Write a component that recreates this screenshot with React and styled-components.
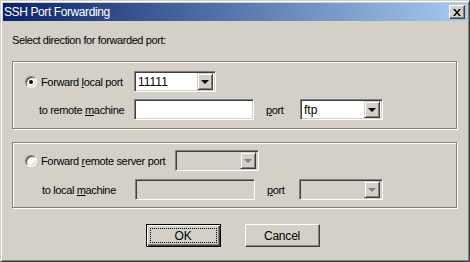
import React from "react";
import styled, { createGlobalStyle } from "styled-components";

const GlobalStyle = createGlobalStyle`
  html, body {
    margin: 0;
    padding: 0;
    background: #d4d0c8;
  }
  body {
    font-family: "Liberation Sans", Arial, sans-serif;
    font-size: 11px;
    letter-spacing: -0.35px;
    color: #000;
  }
`;

const Window = styled.div`
  width: 470px;
  height: 262px;
  box-sizing: border-box;
  background: #d4d0c8;
  border: 1px solid;
  border-color: #d4d0c8 #404040 #404040 #d4d0c8;
  box-shadow: inset 1px 1px #fff, inset -1px -1px #808080;
  padding: 2px;
  display: flex;
  flex-direction: column;
`;

const TitleBar = styled.div`
  height: 18px;
  flex: none;
  display: flex;
  align-items: center;
  justify-content: space-between;
  padding: 0 2px 0 1px;
  background: linear-gradient(to right, #0a246a, #a6caf0);
  color: #fff;
  font-size: 12px;
  letter-spacing: -0.4px;
`;

const CloseButton = styled.div`
  width: 16px;
  height: 14px;
  box-sizing: border-box;
  background: #d4d0c8;
  border: 1px solid;
  border-color: #fff #404040 #404040 #fff;
  box-shadow: inset -1px -1px #808080;
  display: flex;
  align-items: center;
  justify-content: center;
`;

const Body = styled.div`
  flex: 1;
  display: flex;
  flex-direction: column;
  padding: 12px 10px 0 9px;
`;

const Prompt = styled.div`
  height: 14px;
  line-height: 14px;
  margin-bottom: 14px;
  letter-spacing: -0.4px;
`;

const Group = styled.div`
  height: ${(p) => p.$h}px;
  box-sizing: border-box;
  border: 1px solid #808080;
  box-shadow: inset 1px 1px #fff, 1px 1px #fff;
  margin-bottom: ${(p) => p.$mb || 0}px;
  padding: ${(p) => p.$pt}px 0 0 12px;
  display: flex;
  flex-direction: column;
  gap: ${(p) => p.$gap}px;
`;

const Row = styled.div`
  display: flex;
  align-items: center;
  height: 21px;
`;

const RadioLabel = styled.label`
  width: ${(p) => p.$w}px;
  display: flex;
  align-items: center;
  gap: 4px;
  flex: none;
`;

const Radio = styled.span`
  width: 12px;
  height: 12px;
  box-sizing: border-box;
  border-radius: 50%;
  background: #fff;
  border: 1px solid;
  border-color: #808080 #fff #fff #808080;
  box-shadow: inset 1px 1px #404040, inset -1px -1px #d4d0c8;
  display: flex;
  align-items: center;
  justify-content: center;
  &::after {
    content: "";
    width: 4px;
    height: 4px;
    border-radius: 50%;
    background: ${(p) => (p.$checked ? "#000" : "transparent")};
  }
`;

const FieldLabel = styled.span`
  width: ${(p) => p.$w}px;
  padding-left: ${(p) => p.$pl}px;
  box-sizing: border-box;
  flex: none;
`;

const PortLabel = styled.span`
  width: ${(p) => p.$w}px;
  padding-left: 12px;
  flex: none;
`;

const Sunken = styled.div`
  width: ${(p) => p.$w}px;
  height: ${(p) => p.$h || 21}px;
  box-sizing: border-box;
  flex: none;
  background: ${(p) => (p.$disabled ? "#d4d0c8" : "#fff")};
  border: 1px solid;
  border-color: #808080 #fff #fff #808080;
  box-shadow: inset 1px 1px #404040, inset -1px -1px #d4d0c8;
  display: flex;
  align-items: center;
  justify-content: space-between;
  padding: 2px 2px 2px 3px;
  font-size: 12px;
  letter-spacing: 0;
`;

const DropButton = styled.div`
  width: 16px;
  height: 17px;
  box-sizing: border-box;
  background: #d4d0c8;
  border: 1px solid;
  border-color: #d4d0c8 #404040 #404040 #d4d0c8;
  box-shadow: inset 1px 1px #fff, inset -1px -1px #808080;
  display: flex;
  align-items: center;
  justify-content: center;
  &::after {
    content: "";
    border-left: 4px solid transparent;
    border-right: 4px solid transparent;
    border-top: 4px solid ${(p) => (p.$disabled ? "#808080" : "#000")};
  }
`;

const ButtonRow = styled.div`
  display: flex;
  justify-content: center;
  gap: 24px;
  margin-top: 16px;
  padding-right: 4px;
`;

const Button = styled.div`
  width: 75px;
  height: 23px;
  box-sizing: border-box;
  background: #d4d0c8;
  border: 1px solid;
  border-color: ${(p) => (p.$default ? "#000" : "#fff #404040 #404040 #fff")};
  box-shadow: ${(p) =>
    p.$default
      ? "inset 1px 1px #fff, inset -1px -1px #404040, inset -2px -2px #808080"
      : "inset -1px -1px #808080"};
  display: flex;
  align-items: center;
  justify-content: center;
  padding: 3px;
  font-size: 12px;
  letter-spacing: -0.2px;
`;

const Focus = styled.span`
  flex: 1;
  align-self: stretch;
  display: flex;
  align-items: center;
  justify-content: center;
  outline: 1px dotted #000;
  outline-offset: -1px;
`;

const Combo = ({ w, value, disabled }) => (
  <Sunken $w={w} $disabled={disabled}>
    <span>{value}</span>
    <DropButton $disabled={disabled} />
  </Sunken>
);

export default function App() {
  return (
    <>
      <GlobalStyle />
      <Window>
        <TitleBar>
          <span>SSH Port Forwarding</span>
          <CloseButton>
            <svg width="8" height="7" viewBox="0 0 8 7">
              <path d="M0 0h2l2 2.5L6 0h2L5 3.5 8 7H6L4 4.5 2 7H0l3-3.5z" fill="#000" />
            </svg>
          </CloseButton>
        </TitleBar>
        <Body>
          <Prompt>Select direction for forwarded port:</Prompt>
          <Group $h={68} $mb={13} $pt={9} $gap={7}>
            <Row>
              <RadioLabel $w={109}>
                <Radio $checked />
                <span>
                  Forward <u>l</u>ocal port
                </span>
              </RadioLabel>
              <Combo w={82} value="11111" />
            </Row>
            <Row>
              <FieldLabel $w={109} $pl={14}>
                to remote <u>m</u>achine
              </FieldLabel>
              <Sunken $w={120} />
              <PortLabel $w={34}>
                <u>p</u>ort
              </PortLabel>
              <Combo w={83} value="ftp" />
            </Row>
          </Group>
          <Group $h={66} $pt={7} $gap={8}>
            <Row>
              <RadioLabel $w={150}>
                <Radio />
                <span>
                  Forward <u>r</u>emote server port
                </span>
              </RadioLabel>
              <Combo w={84} disabled />
            </Row>
            <Row>
              <FieldLabel $w={110} $pl={17}>
                to local <u>m</u>achine
              </FieldLabel>
              <Sunken $w={120} $disabled />
              <PortLabel $w={32}>
                <u>p</u>ort
              </PortLabel>
              <Combo w={84} disabled />
            </Row>
          </Group>
          <ButtonRow>
            <Button $default>
              <Focus>OK</Focus>
            </Button>
            <Button>Cancel</Button>
          </ButtonRow>
        </Body>
      </Window>
    </>
  );
}
